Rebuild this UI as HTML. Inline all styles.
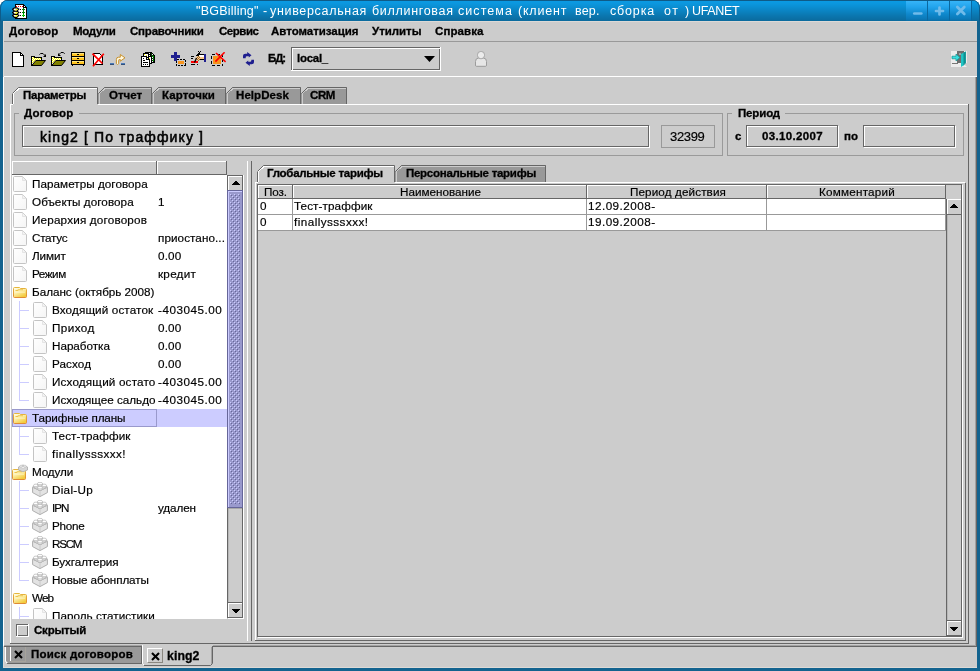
<!DOCTYPE html><html><head><meta charset="utf-8"><title>BGBilling</title><style>html,body{margin:0;padding:0}body{width:980px;height:671px;overflow:hidden;background:#fff;font-family:"Liberation Sans",sans-serif;position:relative}
div,svg{position:absolute;display:block}.t{will-change:transform}.b{-webkit-text-stroke:0.3px #000}.n{-webkit-text-stroke:0.18px #000}</style></head><body>
<div style="left:0px;top:0px;width:980px;height:671px;background:#13638f;border-radius:8px 8px 0 0"></div>
<div style="left:3px;top:21px;width:974px;height:647px;background:#cccccc"></div>
<div style="left:0px;top:0px;width:980px;height:21px;background:linear-gradient(#0f5b87 0px,#0f5b87 1px,#0b9ae3 1px,#0b96dd 4px,#0b86c6 10px,#0b76ae 16px,#0b6a9d 21px);border-radius:8px 8px 0 0;box-shadow:inset 1px 0 0 #0e5c8a,inset -1px 0 0 #0e5c8a"></div>
<div style="left:906px;top:1px;width:66px;height:20px;background:linear-gradient(#36b4f8 0px,#22a4ec 6px,#0f88cc 13px,#0b79b8 18px,#0a6ca4 20px)"></div>
<div style="left:927px;top:1px;width:1px;height:20px;background:#0a68a0"></div>
<div style="left:949px;top:1px;width:1px;height:20px;background:#0a68a0"></div>
<div style="left:971px;top:1px;width:1px;height:20px;background:#0a68a0"></div>
<svg style="left:906px;top:0px" width="66" height="21" viewBox="0 0 66 21"><g stroke="#70bbea" stroke-width="2.7" stroke-linecap="round" fill="none"><path d="M8.3 13.5h7"/><path d="M33.5 7.5v7M30 11h7"/><path d="M51.3 7l7 7M58.3 7l-7 7"/></g></svg>
<div class="t" style="left:195.50px;top:2.67px;line-height:16px;font-size:12.5px;font-weight:normal;letter-spacing:0.218px;color:#fff;white-space:pre;">&quot;BGBilling&quot;</div>
<div class="t" style="left:262.70px;top:2.67px;line-height:16px;font-size:12.5px;font-weight:normal;letter-spacing:-0.672px;color:#fff;white-space:pre;">-</div>
<div class="t" style="left:269.80px;top:2.67px;line-height:16px;font-size:12.5px;font-weight:normal;letter-spacing:0.679px;color:#fff;white-space:pre;">универсальная</div>
<div class="t" style="left:371.80px;top:2.67px;line-height:16px;font-size:12.5px;font-weight:normal;letter-spacing:0.684px;color:#fff;white-space:pre;">биллинговая</div>
<div class="t" style="left:458.40px;top:2.67px;line-height:16px;font-size:12.5px;font-weight:normal;letter-spacing:1.060px;color:#fff;white-space:pre;">система</div>
<div class="t" style="left:518.40px;top:2.67px;line-height:16px;font-size:12.5px;font-weight:normal;letter-spacing:0.794px;color:#fff;white-space:pre;">(клиент</div>
<div class="t" style="left:574.90px;top:2.67px;line-height:16px;font-size:12.5px;font-weight:normal;letter-spacing:0.202px;color:#fff;white-space:pre;">вер.</div>
<div class="t" style="left:609.80px;top:2.67px;line-height:16px;font-size:12.5px;font-weight:normal;letter-spacing:0.831px;color:#fff;white-space:pre;">сборка</div>
<div class="t" style="left:663.50px;top:2.67px;line-height:16px;font-size:12.5px;font-weight:normal;letter-spacing:1.597px;color:#fff;white-space:pre;">от</div>
<div class="t" style="left:684.70px;top:2.67px;line-height:16px;font-size:12.5px;font-weight:normal;letter-spacing:0.228px;color:#fff;white-space:pre;">)</div>
<div class="t" style="left:692.30px;top:2.67px;line-height:16px;font-size:12.5px;font-weight:normal;letter-spacing:-0.352px;color:#fff;white-space:pre;">UFANET</div>
<div style="left:3px;top:41px;width:974px;height:1px;background:#999999"></div>
<div style="left:3px;top:21px;width:974px;height:1px;background:#dcd9d6"></div>
<div class="t b" style="left:9.00px;top:23.02px;line-height:16px;font-size:11.5px;font-weight:bold;letter-spacing:0.214px;color:#000;white-space:pre;">Договор</div>
<div class="t b" style="left:73.00px;top:23.02px;line-height:16px;font-size:11.5px;font-weight:bold;letter-spacing:-0.336px;color:#000;white-space:pre;">Модули</div>
<div class="t b" style="left:130.00px;top:23.02px;line-height:16px;font-size:11.5px;font-weight:bold;letter-spacing:-0.214px;color:#000;white-space:pre;">Справочники</div>
<div class="t b" style="left:219.00px;top:23.02px;line-height:16px;font-size:11.5px;font-weight:bold;letter-spacing:-0.461px;color:#000;white-space:pre;">Сервис</div>
<div class="t b" style="left:271.00px;top:23.02px;line-height:16px;font-size:11.5px;font-weight:bold;letter-spacing:-0.026px;color:#000;white-space:pre;">Автоматизация</div>
<div class="t b" style="left:372.00px;top:23.02px;line-height:16px;font-size:11.5px;font-weight:bold;letter-spacing:-0.027px;color:#000;white-space:pre;">Утилиты</div>
<div class="t b" style="left:435.00px;top:23.02px;line-height:16px;font-size:11.5px;font-weight:bold;letter-spacing:0.085px;color:#000;white-space:pre;">Справка</div>
<div style="left:3px;top:76px;width:974px;height:1px;background:#ffffff"></div>
<div class="t b" style="left:268.20px;top:50.02px;line-height:16px;font-size:11.5px;font-weight:bold;letter-spacing:-1.132px;color:#000;white-space:pre;">БД:</div>
<div style="left:291px;top:47px;width:149px;height:23px;border:1px solid #666666;box-sizing:border-box"></div>
<div style="left:292px;top:48px;width:148px;height:23px;border:1px solid #ffffff;box-sizing:border-box;border-right:none;border-bottom:none"></div>
<div style="left:291px;top:70px;width:150px;height:1px;background:#ffffff"></div>
<div style="left:440px;top:47px;width:1px;height:24px;background:#ffffff"></div>
<div class="t b" style="left:296.50px;top:50.02px;line-height:16px;font-size:11.5px;font-weight:bold;letter-spacing:-0.268px;color:#000;white-space:pre;">local_</div>
<svg style="left:423.5px;top:55.5px" width="11" height="6"><path d="M0 0h11l-5.5 6z" fill="#000"/></svg>
<svg style="left:12px;top:87px" width="86" height="17" shape-rendering="crispEdges"><path d="M0 17V6L6 0H86V17z" fill="#cccccc"/><path d="M1.5 17V6.5L7 1.5H85" stroke="#ffffff" fill="none"/><path d="M0.5 17V6.5" stroke="#666666" fill="none"/><path d="M0.5 6.5L6.5 0.5H85.5V17" stroke="#666666" fill="none" shape-rendering="auto"/></svg>
<svg style="left:98px;top:87px" width="54" height="17" shape-rendering="crispEdges"><path d="M0 17V6L6 0H54V17z" fill="#999999"/><path d="M1.5 17V6.5L7 1.5H53" stroke="#cccccc" fill="none"/><path d="M0.5 6.5L6.5 0.5H53.5V17" stroke="#666666" fill="none" shape-rendering="auto"/></svg>
<svg style="left:152px;top:87px" width="74" height="17" shape-rendering="crispEdges"><path d="M0 17V6L6 0H74V17z" fill="#999999"/><path d="M1.5 17V6.5L7 1.5H73" stroke="#cccccc" fill="none"/><path d="M0.5 6.5L6.5 0.5H73.5V17" stroke="#666666" fill="none" shape-rendering="auto"/></svg>
<svg style="left:226px;top:87px" width="75" height="17" shape-rendering="crispEdges"><path d="M0 17V6L6 0H75V17z" fill="#999999"/><path d="M1.5 17V6.5L7 1.5H74" stroke="#cccccc" fill="none"/><path d="M0.5 6.5L6.5 0.5H74.5V17" stroke="#666666" fill="none" shape-rendering="auto"/></svg>
<svg style="left:301px;top:87px" width="46" height="17" shape-rendering="crispEdges"><path d="M0 17V6L6 0H46V17z" fill="#999999"/><path d="M1.5 17V6.5L7 1.5H45" stroke="#cccccc" fill="none"/><path d="M0.5 6.5L6.5 0.5H45.5V17" stroke="#666666" fill="none" shape-rendering="auto"/></svg>
<div class="t b" style="left:22.50px;top:87.02px;line-height:16px;font-size:11.5px;font-weight:bold;letter-spacing:-0.257px;color:#000;white-space:pre;">Параметры</div>
<div class="t b" style="left:108.50px;top:87.02px;line-height:16px;font-size:11.5px;font-weight:bold;letter-spacing:-0.028px;color:#000;white-space:pre;">Отчет</div>
<div class="t b" style="left:161.50px;top:87.02px;line-height:16px;font-size:11.5px;font-weight:bold;letter-spacing:0.105px;color:#000;white-space:pre;">Карточки</div>
<div class="t b" style="left:235.50px;top:87.02px;line-height:16px;font-size:11.5px;font-weight:bold;letter-spacing:0.072px;color:#000;white-space:pre;">HelpDesk</div>
<div class="t b" style="left:309.50px;top:87.02px;line-height:16px;font-size:11.5px;font-weight:bold;letter-spacing:-0.401px;color:#000;white-space:pre;">CRM</div>
<div style="left:10px;top:104px;width:3px;height:1px;background:#ffffff"></div>
<div style="left:98px;top:104px;width:870px;height:1px;background:#ffffff"></div>
<div style="left:10px;top:104px;width:1px;height:540px;background:#ffffff"></div>
<div style="left:968px;top:104px;width:1px;height:540px;background:#666666"></div>
<div style="left:10px;top:643px;width:959px;height:1px;background:#666666"></div>
<div style="left:14px;top:113px;width:709px;height:43px;box-sizing:border-box;border:1px solid #9a9a9a"></div>
<div style="left:19px;top:113px;width:60px;height:1px;background:#cccccc"></div>
<div class="t b" style="left:24.00px;top:105.02px;line-height:16px;font-size:11.5px;font-weight:bold;letter-spacing:0.214px;color:#000;white-space:pre;">Договор</div>
<div style="left:23px;top:126px;width:627px;height:22px;box-sizing:border-box;border:1px solid #ffffff"></div>
<div style="left:22px;top:125px;width:627px;height:22px;box-sizing:border-box;border:1px solid #666666"></div>
<div class="t" style="left:39.50px;top:129.15px;line-height:16px;font-size:14px;font-weight:normal;letter-spacing:1.106px;color:#000;white-space:pre;-webkit-text-stroke:0.55px #000;">king2 [ По траффику ]</div>
<div style="left:661px;top:125px;width:54px;height:23px;box-sizing:border-box;border:1px solid #999999"></div>
<div class="t n" style="left:670.00px;top:128.50px;line-height:16px;font-size:13px;font-weight:normal;letter-spacing:-0.331px;color:#000;white-space:pre;">32399</div>
<div style="left:727px;top:113px;width:237px;height:43px;box-sizing:border-box;border:1px solid #9a9a9a"></div>
<div style="left:732px;top:113px;width:53px;height:1px;background:#cccccc"></div>
<div class="t b" style="left:738.00px;top:105.02px;line-height:16px;font-size:11.5px;font-weight:bold;letter-spacing:-0.156px;color:#000;white-space:pre;">Период</div>
<div class="t b" style="left:734.50px;top:128.02px;line-height:16px;font-size:11.5px;font-weight:bold;letter-spacing:-0.406px;color:#000;white-space:pre;">с</div>
<div style="left:747px;top:126px;width:92px;height:22px;box-sizing:border-box;border:1px solid #ffffff"></div>
<div style="left:746px;top:125px;width:92px;height:22px;box-sizing:border-box;border:1px solid #666666"></div>
<div class="t b" style="left:761.50px;top:128.02px;line-height:16px;font-size:11.5px;font-weight:bold;letter-spacing:0.344px;color:#000;white-space:pre;">03.10.2007</div>
<div class="t b" style="left:843.50px;top:128.02px;line-height:16px;font-size:11.5px;font-weight:bold;letter-spacing:0.008px;color:#000;white-space:pre;">по</div>
<div style="left:864px;top:126px;width:92px;height:22px;box-sizing:border-box;border:1px solid #ffffff"></div>
<div style="left:863px;top:125px;width:92px;height:22px;box-sizing:border-box;border:1px solid #666666"></div>
<div style="left:12px;top:161px;width:145px;height:14px;background:#cccccc"></div>
<div style="left:12px;top:161px;width:145px;height:1px;background:#ffffff"></div>
<div style="left:12px;top:161px;width:1px;height:14px;background:#ffffff"></div>
<div style="left:12px;top:174px;width:145px;height:1px;background:#666666"></div>
<div style="left:156px;top:161px;width:1px;height:14px;background:#666666"></div>
<div style="left:157px;top:161px;width:70px;height:14px;background:#cccccc"></div>
<div style="left:157px;top:161px;width:70px;height:1px;background:#ffffff"></div>
<div style="left:157px;top:161px;width:1px;height:14px;background:#ffffff"></div>
<div style="left:157px;top:174px;width:70px;height:1px;background:#666666"></div>
<div style="left:226px;top:161px;width:1px;height:14px;background:#666666"></div>
<div style="left:12px;top:175px;width:215px;height:444px;background:#ffffff"></div>
<div style="left:12px;top:409px;width:215px;height:18px;background:#ccccff"></div>
<div style="left:12px;top:409px;width:145px;height:18px;box-sizing:border-box;border:1px solid #9999cc"></div>
<svg width="0" height="0" style="left:0;top:0"><defs><pattern id="bump" width="4" height="4" patternUnits="userSpaceOnUse"><rect x="0" y="0" width="1" height="1" fill="#ccccff"/><rect x="2" y="2" width="1" height="1" fill="#ccccff"/><rect x="1" y="1" width="1" height="1" fill="#666699"/><rect x="3" y="3" width="1" height="1" fill="#666699"/></pattern></defs></svg>
<div style="left:227px;top:175px;width:16px;height:443px;background:#cccccc"></div>
<div style="left:227px;top:175px;width:1px;height:443px;background:#666666"></div>
<div style="left:242px;top:175px;width:1px;height:443px;background:#666666"></div>
<div style="left:243px;top:175px;width:1px;height:444px;background:#ffffff"></div>
<div style="left:228px;top:191px;width:1px;height:411px;background:#b8b8b8"></div>
<div style="left:227px;top:175px;width:16px;height:1px;background:#666666"></div>
<div style="left:228px;top:176px;width:14px;height:1px;background:#ffffff"></div>
<div style="left:228px;top:176px;width:1px;height:15px;background:#ffffff"></div>
<svg style="left:232px;top:181px" width="8" height="4" shape-rendering="crispEdges"><path d="M3 0h2v1h1v1h1v1h1v1H0V3h1V2h1V1h1z" fill="#000"/></svg>
<div style="left:227px;top:602px;width:16px;height:1px;background:#666666"></div>
<div style="left:228px;top:603px;width:14px;height:1px;background:#ffffff"></div>
<div style="left:228px;top:603px;width:1px;height:14px;background:#ffffff"></div>
<div style="left:227px;top:617px;width:16px;height:1px;background:#666666"></div>
<div style="left:228px;top:618px;width:16px;height:1px;background:#ffffff"></div>
<svg style="left:232px;top:609px" width="8" height="4" shape-rendering="crispEdges"><path d="M0 0h8v1H7v1H6v1H5v1H3V3H2V2H1V1H0z" fill="#000"/></svg>
<div style="left:227px;top:190px;width:16px;height:318px;background:#9999cc;box-sizing:border-box;border:1px solid #666699"></div>
<div style="left:228px;top:191px;width:14px;height:1px;background:#ccccff"></div>
<div style="left:228px;top:191px;width:1px;height:316px;background:#ccccff"></div>
<svg style="left:230px;top:194px" width="10" height="310" shape-rendering="crispEdges"><rect width="10" height="310" fill="url(#bump)"/></svg>
<div style="left:228px;top:508px;width:14px;height:1px;background:#a8a8a8"></div>
<svg width="0" height="0" style="left:0;top:0"><defs>
<linearGradient id="gdoc" x1="0" y1="0" x2="1" y2="1"><stop offset="0" stop-color="#ffffff"/><stop offset="1" stop-color="#f5f5f5"/></linearGradient>
<linearGradient id="gfold" x1="0" y1="0" x2="0.6" y2="1"><stop offset="0" stop-color="#fffef2"/><stop offset="0.45" stop-color="#fdf1b0"/><stop offset="1" stop-color="#f3cb3c"/></linearGradient>
<linearGradient id="gfoldb" x1="0" y1="0" x2="0" y2="1"><stop offset="0" stop-color="#e6b63c"/><stop offset="1" stop-color="#df8a34"/></linearGradient>
<linearGradient id="glego" x1="0" y1="0" x2="1" y2="1"><stop offset="0" stop-color="#ffffff"/><stop offset="1" stop-color="#c9c9c9"/></linearGradient>
<g id="idoc"><path d="M1.5 0.5H9.5L13.5 4.5V14.5Q13.5 15.5 12.5 15.5H1.5Q0.5 15.5 0.5 14.5V1.5Q0.5 0.5 1.5 0.5z" fill="url(#gdoc)" stroke="#c4c4c4"/><path d="M9.5 0.8V4.5H13.2" fill="#f3f3f3" stroke="#dedede" stroke-width="0.8"/></g>
<g id="ifold"><path d="M1.5 0.5H6.5L7.5 1.5H12.5Q13.5 1.5 13.5 2.5V9.5Q13.5 10.5 12.5 10.5H1.5Q0.5 10.5 0.5 9.5V1.5Q0.5 0.5 1.5 0.5z" fill="url(#gfold)" stroke="url(#gfoldb)"/><path d="M2.5 3.5H4.5L5.5 2.8H10" stroke="#ecc24a" stroke-width="1.1" fill="none"/><path d="M2 5.2H12" stroke="#fff6c8" stroke-width="0.8"/></g>
<g id="ilego"><path d="M0.6 5.2L8 8.6L15.4 5.2V10.6L8 14.6L0.6 10.6z" fill="#e3e3e3" stroke="#adadad" stroke-width="1"/><path d="M8 8.6V14.4" stroke="#c4c4c4" stroke-width="0.8"/><path d="M0.6 5.2L3 3.6L13 3.6L15.4 5.2L8 8.6z" fill="#ececec" stroke="#b4b4b4" stroke-width="0.8"/><path d="M1.6 3.6V5.2Q4 7 6.4 5.2V3.6" fill="#f4f4f4" stroke="#b0b0b0" stroke-width="0.8"/><ellipse cx="4" cy="3.4" rx="2.5" ry="1.3" fill="#fff" stroke="#b4b4b4" stroke-width="0.7"/><path d="M9.6 3.6V5.2Q12 7 14.4 5.2V3.6" fill="#f4f4f4" stroke="#b0b0b0" stroke-width="0.8"/><ellipse cx="12" cy="3.4" rx="2.5" ry="1.3" fill="#fff" stroke="#b4b4b4" stroke-width="0.7"/><path d="M5.6 1.6V3.4Q8 5 10.4 3.4V1.6" fill="#f4f4f4" stroke="#b0b0b0" stroke-width="0.8"/><ellipse cx="8" cy="1.5" rx="2.5" ry="1.2" fill="#fff" stroke="#b4b4b4" stroke-width="0.7"/><path d="M5.6 5.8V7.6Q8 9.2 10.4 7.6V5.8" fill="#f6f6f6" stroke="#b0b0b0" stroke-width="0.8"/><ellipse cx="8" cy="5.7" rx="2.5" ry="1.2" fill="#fff" stroke="#b8b8b8" stroke-width="0.7"/></g>
<g id="ilegos"><path d="M0.5 3L5 1L9.5 3V6L5 7.8L0.5 6z" fill="#d6d6d6" stroke="#a9a9a9" stroke-width="0.8"/><ellipse cx="3.3" cy="2.2" rx="1.7" ry="1" fill="#f4f4f4" stroke="#b5b5b5" stroke-width="0.5"/><ellipse cx="6.7" cy="2.2" rx="1.7" ry="1" fill="#f4f4f4" stroke="#b5b5b5" stroke-width="0.5"/><ellipse cx="5" cy="3.4" rx="1.7" ry="1" fill="#f4f4f4" stroke="#b5b5b5" stroke-width="0.5"/></g>
</defs></svg>
<div style="left:12px;top:175px;width:215px;height:444px;overflow:hidden">
<svg style="left:1px;top:1px" width="14" height="16"><use href="#idoc"/></svg>
<div class="t n" style="left:20.40px;top:0.95px;line-height:16px;font-size:11.7px;font-weight:normal;letter-spacing:0.041px;color:#000;white-space:pre;">Параметры договора</div>
<svg style="left:1px;top:19px" width="14" height="16"><use href="#idoc"/></svg>
<div class="t n" style="left:20.40px;top:18.95px;line-height:16px;font-size:11.7px;font-weight:normal;letter-spacing:0.053px;color:#000;white-space:pre;">Объекты договора</div>
<div class="t n" style="left:146.30px;top:18.95px;line-height:16px;font-size:11.7px;font-weight:normal;letter-spacing:-0.116px;color:#000;white-space:pre;">1</div>
<svg style="left:1px;top:37px" width="14" height="16"><use href="#idoc"/></svg>
<div class="t n" style="left:20.40px;top:36.95px;line-height:16px;font-size:11.7px;font-weight:normal;letter-spacing:0.181px;color:#000;white-space:pre;">Иерархия договоров</div>
<svg style="left:1px;top:55px" width="14" height="16"><use href="#idoc"/></svg>
<div class="t n" style="left:20.40px;top:54.95px;line-height:16px;font-size:11.7px;font-weight:normal;letter-spacing:-0.292px;color:#000;white-space:pre;">Статус</div>
<div class="t n" style="left:146.30px;top:54.95px;line-height:16px;font-size:11.7px;font-weight:normal;letter-spacing:0.073px;color:#000;white-space:pre;">приостано...</div>
<svg style="left:1px;top:73px" width="14" height="16"><use href="#idoc"/></svg>
<div class="t n" style="left:20.40px;top:72.95px;line-height:16px;font-size:11.7px;font-weight:normal;letter-spacing:-0.065px;color:#000;white-space:pre;">Лимит</div>
<div class="t n" style="left:146.30px;top:72.95px;line-height:16px;font-size:11.7px;font-weight:normal;letter-spacing:0.137px;color:#000;white-space:pre;">0.00</div>
<svg style="left:1px;top:91px" width="14" height="16"><use href="#idoc"/></svg>
<div class="t n" style="left:20.40px;top:90.95px;line-height:16px;font-size:11.7px;font-weight:normal;letter-spacing:-0.449px;color:#000;white-space:pre;">Режим</div>
<div class="t n" style="left:146.30px;top:90.95px;line-height:16px;font-size:11.7px;font-weight:normal;letter-spacing:0.256px;color:#000;white-space:pre;">кредит</div>
<svg style="left:1px;top:112px" width="14" height="11"><use href="#ifold"/></svg>
<div class="t n" style="left:20.40px;top:108.95px;line-height:16px;font-size:11.7px;font-weight:normal;letter-spacing:-0.018px;color:#000;white-space:pre;">Баланс (октябрь 2008)</div>
<div style="left:7px;top:126px;width:1px;height:18px;background:#ccccff"></div>
<div style="left:7px;top:135px;width:10px;height:1px;background:#ccccff"></div>
<svg style="left:21px;top:127px" width="14" height="16"><use href="#idoc"/></svg>
<div class="t n" style="left:40.10px;top:126.95px;line-height:16px;font-size:11.7px;font-weight:normal;letter-spacing:0.122px;color:#000;white-space:pre;">Входящий остаток</div>
<div class="t n" style="left:146.30px;top:126.95px;line-height:16px;font-size:11.7px;font-weight:normal;letter-spacing:0.526px;color:#000;white-space:pre;">-403045.00</div>
<div style="left:7px;top:144px;width:1px;height:18px;background:#ccccff"></div>
<div style="left:7px;top:153px;width:10px;height:1px;background:#ccccff"></div>
<svg style="left:21px;top:145px" width="14" height="16"><use href="#idoc"/></svg>
<div class="t n" style="left:40.10px;top:144.95px;line-height:16px;font-size:11.7px;font-weight:normal;letter-spacing:0.430px;color:#000;white-space:pre;">Приход</div>
<div class="t n" style="left:146.30px;top:144.95px;line-height:16px;font-size:11.7px;font-weight:normal;letter-spacing:0.137px;color:#000;white-space:pre;">0.00</div>
<div style="left:7px;top:162px;width:1px;height:18px;background:#ccccff"></div>
<div style="left:7px;top:171px;width:10px;height:1px;background:#ccccff"></div>
<svg style="left:21px;top:163px" width="14" height="16"><use href="#idoc"/></svg>
<div class="t n" style="left:40.10px;top:162.95px;line-height:16px;font-size:11.7px;font-weight:normal;letter-spacing:-0.023px;color:#000;white-space:pre;">Наработка</div>
<div class="t n" style="left:146.30px;top:162.95px;line-height:16px;font-size:11.7px;font-weight:normal;letter-spacing:0.137px;color:#000;white-space:pre;">0.00</div>
<div style="left:7px;top:180px;width:1px;height:18px;background:#ccccff"></div>
<div style="left:7px;top:189px;width:10px;height:1px;background:#ccccff"></div>
<svg style="left:21px;top:181px" width="14" height="16"><use href="#idoc"/></svg>
<div class="t n" style="left:40.10px;top:180.95px;line-height:16px;font-size:11.7px;font-weight:normal;letter-spacing:0.095px;color:#000;white-space:pre;">Расход</div>
<div class="t n" style="left:146.30px;top:180.95px;line-height:16px;font-size:11.7px;font-weight:normal;letter-spacing:0.137px;color:#000;white-space:pre;">0.00</div>
<div style="left:7px;top:198px;width:1px;height:18px;background:#ccccff"></div>
<div style="left:7px;top:207px;width:10px;height:1px;background:#ccccff"></div>
<svg style="left:21px;top:199px" width="14" height="16"><use href="#idoc"/></svg>
<div class="t n" style="left:40.10px;top:198.95px;line-height:16px;font-size:11.7px;font-weight:normal;letter-spacing:0.168px;color:#000;white-space:pre;">Исходящий остато</div>
<div class="t n" style="left:146.30px;top:198.95px;line-height:16px;font-size:11.7px;font-weight:normal;letter-spacing:0.526px;color:#000;white-space:pre;">-403045.00</div>
<div style="left:7px;top:216px;width:1px;height:10px;background:#ccccff"></div>
<div style="left:7px;top:225px;width:10px;height:1px;background:#ccccff"></div>
<svg style="left:21px;top:217px" width="14" height="16"><use href="#idoc"/></svg>
<div class="t n" style="left:40.10px;top:216.95px;line-height:16px;font-size:11.7px;font-weight:normal;letter-spacing:-0.010px;color:#000;white-space:pre;">Исходящее сальдо</div>
<div class="t n" style="left:146.30px;top:216.95px;line-height:16px;font-size:11.7px;font-weight:normal;letter-spacing:0.526px;color:#000;white-space:pre;">-403045.00</div>
<svg style="left:1px;top:238px" width="14" height="11"><use href="#ifold"/></svg>
<div class="t n" style="left:20.40px;top:234.95px;line-height:16px;font-size:11.7px;font-weight:normal;letter-spacing:-0.105px;color:#000;white-space:pre;">Тарифные планы</div>
<div style="left:7px;top:252px;width:1px;height:18px;background:#ccccff"></div>
<div style="left:7px;top:261px;width:10px;height:1px;background:#ccccff"></div>
<svg style="left:21px;top:253px" width="14" height="16"><use href="#idoc"/></svg>
<div class="t n" style="left:40.10px;top:252.95px;line-height:16px;font-size:11.7px;font-weight:normal;letter-spacing:0.099px;color:#000;white-space:pre;">Тест-траффик</div>
<div style="left:7px;top:270px;width:1px;height:10px;background:#ccccff"></div>
<div style="left:7px;top:279px;width:10px;height:1px;background:#ccccff"></div>
<svg style="left:21px;top:271px" width="14" height="16"><use href="#idoc"/></svg>
<div class="t n" style="left:40.10px;top:270.95px;line-height:16px;font-size:11.7px;font-weight:normal;letter-spacing:0.414px;color:#000;white-space:pre;">finallysssxxx!</div>
<svg style="left:0px;top:294px" width="14" height="11"><use href="#ifold"/></svg>
<svg style="left:6px;top:289px" width="10" height="8"><use href="#ilegos"/></svg>
<div class="t n" style="left:20.40px;top:288.95px;line-height:16px;font-size:11.7px;font-weight:normal;letter-spacing:-0.129px;color:#000;white-space:pre;">Модули</div>
<div style="left:7px;top:306px;width:1px;height:18px;background:#ccccff"></div>
<div style="left:7px;top:315px;width:10px;height:1px;background:#ccccff"></div>
<svg style="left:20px;top:307px" width="16" height="15"><use href="#ilego"/></svg>
<div class="t n" style="left:40.10px;top:306.95px;line-height:16px;font-size:11.7px;font-weight:normal;letter-spacing:0.290px;color:#000;white-space:pre;">Dial-Up</div>
<div style="left:7px;top:324px;width:1px;height:18px;background:#ccccff"></div>
<div style="left:7px;top:333px;width:10px;height:1px;background:#ccccff"></div>
<svg style="left:20px;top:325px" width="16" height="15"><use href="#ilego"/></svg>
<div class="t n" style="left:40.10px;top:324.95px;line-height:16px;font-size:11.7px;font-weight:normal;letter-spacing:-0.961px;color:#000;white-space:pre;">IPN</div>
<div class="t n" style="left:146.30px;top:324.95px;line-height:16px;font-size:11.7px;font-weight:normal;letter-spacing:-0.110px;color:#000;white-space:pre;">удален</div>
<div style="left:7px;top:342px;width:1px;height:18px;background:#ccccff"></div>
<div style="left:7px;top:351px;width:10px;height:1px;background:#ccccff"></div>
<svg style="left:20px;top:343px" width="16" height="15"><use href="#ilego"/></svg>
<div class="t n" style="left:40.10px;top:342.95px;line-height:16px;font-size:11.7px;font-weight:normal;letter-spacing:-0.259px;color:#000;white-space:pre;">Phone</div>
<div style="left:7px;top:360px;width:1px;height:18px;background:#ccccff"></div>
<div style="left:7px;top:369px;width:10px;height:1px;background:#ccccff"></div>
<svg style="left:20px;top:361px" width="16" height="15"><use href="#ilego"/></svg>
<div class="t n" style="left:40.10px;top:360.95px;line-height:16px;font-size:11.7px;font-weight:normal;letter-spacing:-1.280px;color:#000;white-space:pre;">RSCM</div>
<div style="left:7px;top:378px;width:1px;height:18px;background:#ccccff"></div>
<div style="left:7px;top:387px;width:10px;height:1px;background:#ccccff"></div>
<svg style="left:20px;top:379px" width="16" height="15"><use href="#ilego"/></svg>
<div class="t n" style="left:40.10px;top:378.95px;line-height:16px;font-size:11.7px;font-weight:normal;letter-spacing:-0.092px;color:#000;white-space:pre;">Бухгалтерия</div>
<div style="left:7px;top:396px;width:1px;height:10px;background:#ccccff"></div>
<div style="left:7px;top:405px;width:10px;height:1px;background:#ccccff"></div>
<svg style="left:20px;top:397px" width="16" height="15"><use href="#ilego"/></svg>
<div class="t n" style="left:40.10px;top:396.95px;line-height:16px;font-size:11.7px;font-weight:normal;letter-spacing:-0.126px;color:#000;white-space:pre;">Новые абонплаты</div>
<svg style="left:1px;top:418px" width="14" height="11"><use href="#ifold"/></svg>
<div class="t n" style="left:20.40px;top:414.95px;line-height:16px;font-size:11.7px;font-weight:normal;letter-spacing:-0.876px;color:#000;white-space:pre;">Web</div>
<div style="left:7px;top:432px;width:1px;height:18px;background:#ccccff"></div>
<div style="left:7px;top:441px;width:10px;height:1px;background:#ccccff"></div>
<svg style="left:21px;top:433px" width="14" height="16"><use href="#idoc"/></svg>
<div class="t n" style="left:40.10px;top:432.95px;line-height:16px;font-size:11.7px;font-weight:normal;letter-spacing:0.020px;color:#000;white-space:pre;">Пароль статистики</div>
</div>
<div style="left:16px;top:624px;width:12px;height:12px;box-sizing:border-box;border:1px solid #666666"></div>
<div style="left:17px;top:625px;width:11px;height:1px;background:#ffffff"></div>
<div style="left:17px;top:625px;width:1px;height:11px;background:#ffffff"></div>
<div style="left:16px;top:636px;width:13px;height:1px;background:#ffffff"></div>
<div style="left:28px;top:624px;width:1px;height:13px;background:#ffffff"></div>
<div class="t b" style="left:33.50px;top:622.02px;line-height:16px;font-size:11.5px;font-weight:bold;letter-spacing:-0.205px;color:#000;white-space:pre;">Скрытый</div>
<div style="left:247px;top:161px;width:1px;height:480px;background:#ffffff"></div>
<div style="left:251px;top:161px;width:1px;height:480px;background:#666666"></div>
<svg style="left:257px;top:165px" width="138" height="17" shape-rendering="crispEdges"><path d="M0 17V6L6 0H138V17z" fill="#cccccc"/><path d="M1.5 17V6.5L7 1.5H137" stroke="#ffffff" fill="none"/><path d="M0.5 17V6.5" stroke="#666666" fill="none"/><path d="M0.5 6.5L6.5 0.5H137.5V17" stroke="#666666" fill="none" shape-rendering="auto"/></svg>
<svg style="left:395px;top:165px" width="151" height="17" shape-rendering="crispEdges"><path d="M0 17V6L6 0H151V17z" fill="#999999"/><path d="M1.5 17V6.5L7 1.5H150" stroke="#cccccc" fill="none"/><path d="M0.5 6.5L6.5 0.5H150.5V17" stroke="#666666" fill="none" shape-rendering="auto"/></svg>
<div class="t b" style="left:267.00px;top:165.02px;line-height:16px;font-size:11.5px;font-weight:bold;letter-spacing:-0.269px;color:#000;white-space:pre;">Глобальные тарифы</div>
<div class="t b" style="left:405.50px;top:165.02px;line-height:16px;font-size:11.5px;font-weight:bold;letter-spacing:-0.273px;color:#000;white-space:pre;">Персональные тарифы</div>
<div style="left:255px;top:182px;width:3px;height:1px;background:#ffffff"></div>
<div style="left:395px;top:182px;width:570px;height:1px;background:#ffffff"></div>
<div style="left:255px;top:182px;width:1px;height:458px;background:#ffffff"></div>
<div style="left:257px;top:184px;width:1px;height:453px;background:#666666"></div>
<div style="left:257px;top:184px;width:705px;height:1px;background:#666666"></div>
<div style="left:258px;top:185px;width:35px;height:14px;background:#cccccc"></div>
<div style="left:258px;top:185px;width:35px;height:1px;background:#ffffff"></div>
<div style="left:258px;top:185px;width:1px;height:14px;background:#ffffff"></div>
<div style="left:258px;top:198px;width:35px;height:1px;background:#666666"></div>
<div style="left:292px;top:185px;width:1px;height:14px;background:#666666"></div>
<div class="t n" style="left:263.50px;top:183.95px;line-height:16px;font-size:11.7px;font-weight:normal;letter-spacing:-0.094px;color:#000;white-space:pre;">Поз.</div>
<div style="left:293px;top:185px;width:294px;height:14px;background:#cccccc"></div>
<div style="left:293px;top:185px;width:294px;height:1px;background:#ffffff"></div>
<div style="left:293px;top:185px;width:1px;height:14px;background:#ffffff"></div>
<div style="left:293px;top:198px;width:294px;height:1px;background:#666666"></div>
<div style="left:586px;top:185px;width:1px;height:14px;background:#666666"></div>
<div class="t n" style="left:399.50px;top:183.95px;line-height:16px;font-size:11.7px;font-weight:normal;letter-spacing:-0.003px;color:#000;white-space:pre;">Наименование</div>
<div style="left:587px;top:185px;width:180px;height:14px;background:#cccccc"></div>
<div style="left:587px;top:185px;width:180px;height:1px;background:#ffffff"></div>
<div style="left:587px;top:185px;width:1px;height:14px;background:#ffffff"></div>
<div style="left:587px;top:198px;width:180px;height:1px;background:#666666"></div>
<div style="left:766px;top:185px;width:1px;height:14px;background:#666666"></div>
<div class="t n" style="left:629.50px;top:183.95px;line-height:16px;font-size:11.7px;font-weight:normal;letter-spacing:0.109px;color:#000;white-space:pre;">Период действия</div>
<div style="left:767px;top:185px;width:179px;height:14px;background:#cccccc"></div>
<div style="left:767px;top:185px;width:179px;height:1px;background:#ffffff"></div>
<div style="left:767px;top:185px;width:1px;height:14px;background:#ffffff"></div>
<div style="left:767px;top:198px;width:179px;height:1px;background:#666666"></div>
<div style="left:945px;top:185px;width:1px;height:14px;background:#666666"></div>
<div class="t n" style="left:818.50px;top:183.95px;line-height:16px;font-size:11.7px;font-weight:normal;letter-spacing:0.216px;color:#000;white-space:pre;">Комментарий</div>
<div style="left:961px;top:184px;width:1px;height:15px;background:#666666"></div>
<div style="left:258px;top:199px;width:688px;height:31px;background:#ffffff"></div>
<div style="left:258px;top:214px;width:688px;height:1px;background:#999999"></div>
<div style="left:258px;top:230px;width:688px;height:1px;background:#999999"></div>
<div style="left:292px;top:199px;width:1px;height:32px;background:#999999"></div>
<div style="left:586px;top:199px;width:1px;height:32px;background:#999999"></div>
<div style="left:766px;top:199px;width:1px;height:32px;background:#999999"></div>
<div style="left:945px;top:199px;width:1px;height:32px;background:#999999"></div>
<div class="t n" style="left:259.50px;top:198.45px;line-height:16px;font-size:11.7px;font-weight:normal;letter-spacing:0.484px;color:#000;white-space:pre;">0</div>
<div class="t n" style="left:294.00px;top:198.45px;line-height:16px;font-size:11.7px;font-weight:normal;letter-spacing:0.099px;color:#000;white-space:pre;">Тест-траффик</div>
<div class="t n" style="left:588.00px;top:198.45px;line-height:16px;font-size:11.7px;font-weight:normal;letter-spacing:0.464px;color:#000;white-space:pre;">12.09.2008-</div>
<div class="t n" style="left:259.50px;top:214.45px;line-height:16px;font-size:11.7px;font-weight:normal;letter-spacing:0.484px;color:#000;white-space:pre;">0</div>
<div class="t n" style="left:294.00px;top:214.45px;line-height:16px;font-size:11.7px;font-weight:normal;letter-spacing:0.450px;color:#000;white-space:pre;">finallysssxxx!</div>
<div class="t n" style="left:588.00px;top:214.45px;line-height:16px;font-size:11.7px;font-weight:normal;letter-spacing:0.464px;color:#000;white-space:pre;">19.09.2008-</div>
<div style="left:946px;top:199px;width:16px;height:437px;background:#cccccc"></div>
<div style="left:946px;top:199px;width:1px;height:437px;background:#666666"></div>
<div style="left:961px;top:199px;width:1px;height:437px;background:#666666"></div>
<div style="left:962px;top:199px;width:1px;height:437px;background:#ffffff"></div>
<div style="left:947px;top:214px;width:1px;height:406px;background:#b8b8b8"></div>
<div style="left:947px;top:199px;width:14px;height:1px;background:#ffffff"></div>
<div style="left:947px;top:199px;width:1px;height:15px;background:#ffffff"></div>
<svg style="left:950px;top:204px" width="8" height="4" shape-rendering="crispEdges"><path d="M3 0h2v1h1v1h1v1h1v1H0V3h1V2h1V1h1z" fill="#000"/></svg>
<div style="left:947px;top:214px;width:14px;height:1px;background:#666666"></div>
<div style="left:946px;top:620px;width:16px;height:1px;background:#666666"></div>
<div style="left:947px;top:621px;width:14px;height:1px;background:#ffffff"></div>
<div style="left:947px;top:621px;width:1px;height:14px;background:#ffffff"></div>
<div style="left:946px;top:635px;width:16px;height:1px;background:#666666"></div>
<svg style="left:950px;top:627px" width="8" height="4" shape-rendering="crispEdges"><path d="M0 0h8v1H7v1H6v1H5v1H3V3H2V2H1V1H0z" fill="#000"/></svg>
<div style="left:257px;top:636px;width:705px;height:1px;background:#666666"></div>
<div style="left:258px;top:637px;width:705px;height:1px;background:#ffffff"></div>
<div style="left:962px;top:185px;width:1px;height:453px;background:#ffffff"></div>
<div style="left:965px;top:183px;width:1px;height:458px;background:#666666"></div>
<div style="left:255px;top:640px;width:711px;height:1px;background:#666666"></div>
<div style="left:4px;top:645px;width:138px;height:1px;background:#a2a2a2"></div>
<div style="left:213px;top:645px;width:763px;height:1px;background:#a2a2a2"></div>
<div style="left:3px;top:646px;width:139px;height:1px;background:#666666"></div>
<div style="left:213px;top:646px;width:764px;height:1px;background:#666666"></div>
<div style="left:975px;top:77px;width:1px;height:569px;background:#a2a2a2"></div>
<div style="left:976px;top:77px;width:1px;height:570px;background:#666666"></div>
<div style="left:4px;top:667px;width:973px;height:1px;background:#dcd9d6"></div>
<div style="left:3px;top:21px;width:1px;height:647px;background:#dcd9d6"></div>
<div style="left:3px;top:77px;width:1px;height:569px;background:#ffffff"></div>
<svg style="left:5px;top:647px" width="137" height="17" shape-rendering="crispEdges"><path d="M1 0H137V16H3L1 14z" fill="#999999"/><path d="M0.5 0V14.5L2.5 16.5" stroke="#ffffff" fill="none" shape-rendering="auto"/><path d="M2 16.5H136.5V0" stroke="#666666" fill="none"/></svg>
<svg style="left:142px;top:645px" width="71" height="21" shape-rendering="crispEdges"><path d="M0 0H71V18L68 21H3L0 18z" fill="#cccccc"/><path d="M0.5 0V18.5L2.5 20.5" stroke="#ffffff" fill="none" shape-rendering="auto"/><path d="M69.5 2V18.5" stroke="#a2a2a2" fill="none"/><path d="M2 20.5H68.5L70.5 18.5V1" stroke="#666666" fill="none" shape-rendering="auto"/></svg>
<div style="left:10px;top:647px;width:1px;height:14px;background:#ffffff"></div>
<div style="left:25px;top:647px;width:1px;height:15px;background:#a6a39c"></div>
<div style="left:11px;top:661px;width:15px;height:1px;background:#a6a39c"></div>
<svg style="left:13.5px;top:649.5px" width="9" height="9"><path d="M1 1L8 8M8 1L1 8" stroke="#000" stroke-width="2.1" fill="none"/><rect x="3" y="3" width="3" height="3" fill="#000"/></svg>
<div style="left:147px;top:648px;width:16px;height:15px;box-sizing:border-box;border:1px solid #ffffff;border-right-color:#8a8780;border-bottom-color:#8a8780"></div>
<svg style="left:150.5px;top:651.5px" width="9" height="9"><path d="M1 1L8 8M8 1L1 8" stroke="#000" stroke-width="2.1" fill="none"/><rect x="3" y="3" width="3" height="3" fill="#000"/></svg>
<div class="t b" style="left:30.50px;top:646.02px;line-height:16px;font-size:11.5px;font-weight:bold;letter-spacing:0.216px;color:#000;white-space:pre;">Поиск договоров</div>
<div class="t b" style="left:167.00px;top:647.74px;line-height:16px;font-size:12.3px;font-weight:bold;letter-spacing:0.075px;color:#000;white-space:pre;">king2</div>
<svg style="left:12px;top:4px" width="15" height="15" shape-rendering="crispEdges">
<path d="M3.5 0.5H11.5L14.5 3.5V14.5H3.5z" fill="#fff" stroke="#000"/>
<path d="M11.5 0.5V3.5H14.5" fill="none" stroke="#000"/>
<rect x="4" y="2" width="1" height="1" fill="#f00"/><rect x="6" y="2" width="1" height="1" fill="#f00"/><rect x="8" y="2" width="1" height="1" fill="#f00"/><rect x="10" y="2" width="1" height="1" fill="#f00"/>
<rect x="8" y="5" width="1" height="1" fill="#000"/><rect x="8" y="8" width="1" height="1" fill="#000"/><rect x="8" y="11" width="1" height="1" fill="#000"/>
<path d="M11 4h1v1h1v1h-1v1h-1v-1h-1v-1h1z" fill="#008000"/><path d="M11 7h1v1h1v1h-1v1h-1v-1h-1v-1h1z" fill="#008000"/><path d="M11 10h1v1h1v1h-1v1h-1v-1h-1v-1h1z" fill="#00c000"/>
<rect x="12" y="4" width="2" height="10" fill="#000" opacity="0"/>
<g shape-rendering="auto">
<path d="M0.6 11.4L2.4 10.0H4.8L6.8 11.4L4.8 13.4H2.4z" fill="#fff" stroke="#000" stroke-width="1.2"/><path d="M2.6 12.8L3.6 11.600000000000001L5 11.0L6 11.4L4.6 12.8z" fill="#f6f600"/><path d="M0.6 8.4L2.4 7.0H4.8L6.8 8.4L4.8 10.4H2.4z" fill="#fff" stroke="#000" stroke-width="1.2"/><path d="M2.6 9.8L3.6 8.600000000000001L5 8.0L6 8.4L4.6 9.8z" fill="#f6f600"/><path d="M0.6 5.2L2.4 3.8000000000000003H4.8L6.8 5.2L4.8 7.2H2.4z" fill="#fff" stroke="#000" stroke-width="1.2"/><path d="M2.6 6.6L3.6 5.4L5 4.800000000000001L6 5.2L4.6 6.6z" fill="#f6f600"/></g></svg>
<svg style="left:12px;top:52px" width="12" height="15" shape-rendering="crispEdges"><path d="M0.5 0.5H8.5L11.5 3.5V14.5H0.5z" fill="#fff" stroke="#000"/><path d="M8.5 0.5V3.5H11.5" fill="none" stroke="#000"/></svg>
<svg width="0" height="0" style="left:0;top:0"><defs><pattern id="dith" width="2" height="2" patternUnits="userSpaceOnUse"><rect width="2" height="2" fill="#ffff00"/><rect x="0" y="0" width="1" height="1" fill="#fff"/><rect x="1" y="1" width="1" height="1" fill="#fff"/></pattern></defs></svg>
<svg style="left:31px;top:52px" width="16" height="14" shape-rendering="crispEdges">
<path d="M1 5h3v1h6v2H5L1 12z" fill="url(#dith)"/>
<path d="M0.5 14V4.5H3.5V5.5H10.5V8" fill="none" stroke="#000"/>
<path d="M0.8 13.5L4.8 8.5H14.5L10.5 13.5z" fill="#808000" stroke="#000" shape-rendering="auto"/>
<path d="M8.5 2.6L9.6 1.5H12L14.3 3.8" stroke="#000" fill="none" shape-rendering="auto"/><path d="M12 5h3V2z" fill="#000" shape-rendering="auto"/></svg>
<svg style="left:51px;top:52px" width="16" height="14" shape-rendering="crispEdges">
<path d="M1 5h3v1h6v2H5L1 12z" fill="url(#dith)"/>
<path d="M0.5 14V4.5H3.5V5.5H10.5V8" fill="none" stroke="#000"/>
<path d="M0.8 13.5L4.8 8.5H14.5L10.5 13.5z" fill="#808000" stroke="#000" shape-rendering="auto"/>
<path d="M13.6 1.8L12.4 0.5H10L8 2.5" stroke="#000" fill="none" shape-rendering="auto"/><path d="M7 1v3h3z" fill="#000" shape-rendering="auto"/></svg>
<svg style="left:71px;top:52px" width="14" height="14" shape-rendering="crispEdges">
<rect x="0.5" y="0.5" width="13" height="12" fill="#ffc420" stroke="#000"/>
<rect x="1" y="1" width="12" height="1" fill="#ffe680"/><rect x="1" y="5" width="12" height="1" fill="#ffe680"/><rect x="1" y="9" width="12" height="1" fill="#ffe680"/>
<rect x="1" y="4" width="12" height="1" fill="#000"/><rect x="1" y="8" width="12" height="1" fill="#000"/>
<rect x="6" y="2" width="2" height="1" fill="#000"/><rect x="6" y="6" width="2" height="1" fill="#000"/><rect x="6" y="10" width="2" height="1" fill="#000"/>
<rect x="1" y="13" width="1" height="1" fill="#000"/><rect x="12" y="13" width="1" height="1" fill="#000"/></svg>
<svg style="left:92px;top:52px" width="13" height="15" shape-rendering="crispEdges">
<path d="M1.5 1.5H7.5L10.5 4.5V12.5H1.5z" fill="#fff" stroke="#000"/>
<path d="M0.5 1.7L10.5 11.5M11.8 1.7L1 14.3" stroke="#ff0000" stroke-width="1.7" fill="none" shape-rendering="auto"/></svg>
<svg style="left:110px;top:54px" width="16" height="11" shape-rendering="crispEdges">
<rect x="0" y="9" width="4" height="1" fill="#4a7ab8"/><rect x="0" y="10" width="4" height="1" fill="#34507a"/>
<rect x="11" y="9" width="4" height="1" fill="#4a7ab8"/><rect x="11" y="10" width="4" height="1" fill="#34507a"/>
<path d="M7.5 10.6L6.4 9.6V5.5Q6.4 3.2 8.5 3.2H10.3V0.5L15 3.8L10.3 7.2V5.6H9.2Q8.7 5.6 8.7 6.3V9.6z" fill="#fff8e0" stroke="#c8922e" stroke-width="1" shape-rendering="auto"/></svg>
<svg style="left:141px;top:52px" width="15" height="15" shape-rendering="crispEdges">
<g transform="translate(-1,0)"><path d="M5.5 0.5H11.5L14.5 3.5V10.5H5.5z" fill="#0a3a0a" stroke="#000"/>
<rect x="5" y="0" width="6" height="2" fill="#000"/>
<rect x="8" y="1" width="2" height="2" fill="#00a000"/><rect x="9" y="1" width="1" height="1" fill="#fff"/>
<rect x="12" y="2" width="1" height="1" fill="#fff"/><rect x="12" y="4" width="2" height="1" fill="#00a000"/><rect x="12" y="5" width="1" height="1" fill="#fff"/><rect x="13" y="6" width="1" height="1" fill="#00a000"/><rect x="12" y="7" width="1" height="1" fill="#fff"/><rect x="13" y="8" width="1" height="1" fill="#00a000"/><rect x="12" y="9" width="1" height="1" fill="#fff"/>
</g>
<path d="M2.5 1.5H7.5L10.5 4.5V11.5H2.5z" fill="#fff" stroke="#000"/>
<rect x="7" y="2" width="3" height="3" fill="#000"/><rect x="8" y="3" width="1" height="1" fill="#fff"/>
<rect x="3" y="2" width="1" height="1" fill="#ffff00"/><rect x="5" y="3" width="1" height="1" fill="#ffff00"/><rect x="8" y="6" width="1" height="1" fill="#ffff00"/>
<path d="M0.5 4.5H5.5L8.5 7.5V14.5H0.5z" fill="#fff" stroke="#000"/><path d="M5.5 4.5V7.5H8.5" fill="none" stroke="#000"/>
<rect x="6" y="5" width="2" height="2" fill="#000"/><rect x="6" y="6" width="1" height="1" fill="#fff"/>
<rect x="2" y="6" width="1" height="1" fill="#000"/><rect x="2" y="8" width="2" height="1" fill="#000"/><rect x="2" y="10" width="5" height="1" fill="#000"/>
<rect x="2" y="12" width="1" height="1" fill="#000"/><rect x="4" y="12" width="1" height="1" fill="#000"/><rect x="6" y="12" width="1" height="1" fill="#000"/></svg>
<svg style="left:171px;top:52px" width="15" height="14" shape-rendering="crispEdges">
<path d="M3 0h3v3h3v3H6v3H3V6H0V3h3z" fill="#1f1f8f"/>
<path d="M5.5 7.5H14.5V13.5H5.5z" fill="none" stroke="#000" stroke-dasharray="2 1"/>
<rect x="7" y="9" width="6" height="3" fill="#f7941d"/></svg>
<svg width="0" height="0" style="left:0;top:0"><defs><pattern id="dith2" width="2" height="2" patternUnits="userSpaceOnUse"><rect width="2" height="2" fill="#fbc98c"/><rect x="0" y="0" width="1" height="1" fill="#a06a2a"/><rect x="1" y="1" width="1" height="1" fill="#a06a2a"/></pattern></defs></svg>
<svg style="left:191px;top:51px" width="15" height="14" shape-rendering="crispEdges">
<rect x="0" y="5" width="3" height="1" fill="#000"/><rect x="0" y="7" width="2" height="1" fill="#000"/>
<rect x="0" y="10" width="7" height="2" fill="#ff0000"/>
<rect x="0" y="13" width="4" height="1" fill="#000"/><rect x="6" y="13" width="1" height="1" fill="#000"/>
<rect x="8" y="3" width="5" height="1" fill="#000"/><rect x="8" y="8" width="5" height="1" fill="#000"/>
<rect x="8" y="4" width="5" height="2" fill="#fff"/><rect x="8" y="6" width="5" height="2" fill="#fbc98c"/>
<rect x="13" y="3" width="2" height="8" fill="#1f1f8f"/>
<path d="M4 8L6 5H9V8L8 10H6z" fill="url(#dith2)"/>
<path d="M5 5L6 3L8 2V5z" fill="#000"/>
<rect x="7" y="0" width="1" height="1" fill="#000"/><rect x="9" y="0" width="1" height="1" fill="#000"/><rect x="8" y="1" width="1" height="2" fill="#000"/>
<path d="M5.5 7L3.5 11.5" stroke="#000" stroke-width="1.3" shape-rendering="auto"/></svg>
<svg style="left:211px;top:52px" width="16" height="14" shape-rendering="crispEdges">
<path d="M0.5 2.5H11.5V13.5H0.5z" fill="none" stroke="#000" stroke-dasharray="3 2"/>
<rect x="2" y="4" width="8" height="8" fill="#f7941d"/>
<path d="M5 1L14.6 9.8M13.6 0.3L4.4 9.6" stroke="#ff0000" stroke-width="1.6" shape-rendering="auto"/></svg>
<svg style="left:243px;top:52px" width="11" height="14" shape-rendering="crispEdges"><g shape-rendering="auto" fill="#1f1f8f">
<path d="M4.2 0L8.5 3.2L5.8 5.6V4.2H3.6Q2.6 4.2 2.6 6.2H0V3.8Q0 1.8 2.4 1.8H4.2z"/>
<path d="M6.8 14L2.5 10.8L5.2 8.4V9.8H7.4Q8.4 9.8 8.4 7.8H11V10.2Q11 12.2 8.6 12.2H6.8z"/></g></svg>
<svg style="left:475px;top:51px" width="12" height="16" shape-rendering="crispEdges"><g shape-rendering="auto">
<path d="M1.2 15.3Q0.5 15.3 0.5 14V10.5Q0.5 7.2 3.5 7H8.5Q11.5 7.2 11.5 10.5V14Q11.5 15.3 10.8 15.3z" fill="#e6e6e6" stroke="#9c9c9c"/>
<rect x="2.5" y="0.5" width="7" height="7.2" rx="3.2" fill="#ececec" stroke="#a4a4a4"/>
</g></svg>
<svg style="left:951px;top:51px" width="16" height="16" shape-rendering="crispEdges"><g shape-rendering="auto">
<rect x="0" y="0" width="16" height="16" fill="#ededed"/>
<rect x="6" y="0" width="7" height="12" fill="#6e6e6e"/>
<rect x="8" y="2" width="2" height="2" fill="#9aa"/>
<path d="M10 3L14.8 0.5V13L10 16z" fill="#1fc4c4"/>
<path d="M12.5 1.8L14.8 0.5V13L12.5 14.5z" fill="#0f8f8f"/>
<path d="M1 5.2H5V3L9 6.5L5 10V7.8H1z" fill="#38e0e0" stroke="#0f8f8f" stroke-width="0.7"/>
<rect x="1" y="12" width="6" height="1" fill="#777"/>
<path d="M13 13L16 16V12z" fill="#ccc"/>
</g></svg>
</body></html>
